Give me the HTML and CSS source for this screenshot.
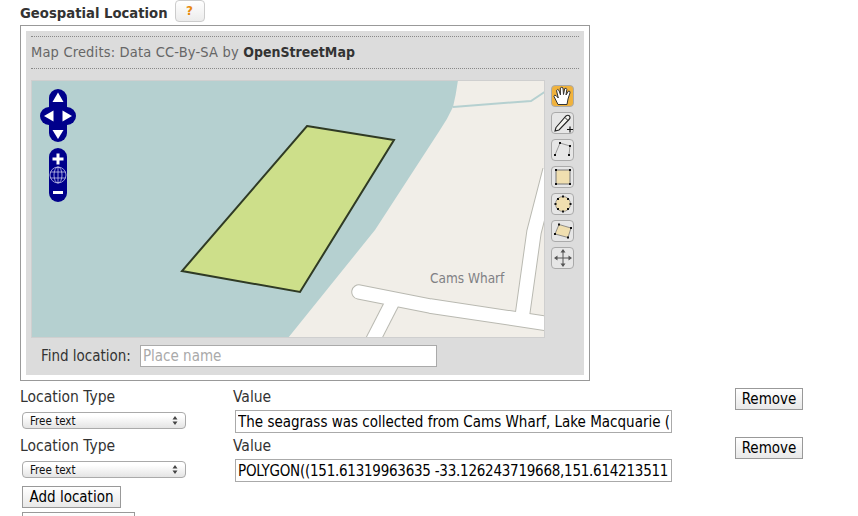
FILE: index.html
```html
<!DOCTYPE html>
<html lang="en">
<head>
<meta charset="utf-8">
<title>Geospatial Location</title>
<link rel="stylesheet" href="styles.css">
</head>
<body>
<div class="heading">
  <h2 class="title">Geospatial Location</h2>
  <button class="help" type="button">?</button>
</div>
<div class="frame">
  <div class="panel">
    <div class="credits">Map Credits: Data CC-By-SA by <strong>OpenStreetMap</strong></div>
    <div class="map-row">
      <div class="map">
        <svg class="map-art" viewBox="32 81 512 256" width="512" height="256" aria-hidden="true">
          <rect x="31" y="80" width="514" height="258" fill="#b5d0d0"/>
          <path d="M458 80 Q456 95 453 107 Q447 120 440 130 L375 230 L288 338 H545 V80 Z" fill="#f1eee8"/>
          <path d="M453 107 L531 101 L546 91" fill="none" stroke="#b5d0d0" stroke-width="2"/>
          <g fill="none" stroke="#b9b9b1" stroke-width="15.500" stroke-linejoin="round">
            <path d="M392 303 L372 342"/>
            <path d="M522 318 L534 232 L550 170"/>
            <path d="M359 292 L430 306 L550 324" stroke-linecap="round"/>
          </g>
          <g fill="none" stroke="#fff" stroke-width="13.500" stroke-linejoin="round">
            <path d="M392 303 L372 342"/>
            <path d="M522 318 L534 232 L550 170"/>
            <path d="M359 292 L430 306 L550 324" stroke-linecap="round"/>
          </g>
          <text x="430" y="283" class="place">Cams Wharf</text>
          <path d="M307 126 L394 140 L300 292 L182 271 Z" fill="#cddf8a" stroke="#2f3a24" stroke-width="2"/>
          <g fill="#00008b">
            <rect x="49" y="89" width="18" height="53" rx="9"/>
            <rect x="40" y="107" width="36" height="18" rx="9"/>
            <rect x="49" y="148" width="18" height="54" rx="9"/>
          </g>
          <g fill="#fff">
            <path d="M58 92.500 L63.500 102 H52.500 Z"/>
            <path d="M58 139 L52.500 130 H63.500 Z"/>
            <path d="M44 116 L53.500 110.500 V121.500 Z"/>
            <path d="M72 116 L62.500 110.500 V121.500 Z"/>
            <rect x="52.500" y="157.500" width="11" height="3"/>
            <rect x="56.500" y="153.500" width="3" height="11"/>
            <rect x="53" y="191" width="10" height="3"/>
          </g>
          <g fill="none" stroke="#d8d8f4" stroke-width=".7">
            <circle cx="58" cy="175" r="8"/>
            <ellipse cx="58" cy="175" rx="4" ry="8"/>
            <path d="M58 167 V183 M50.500 172 H65.500 M50.500 178 H65.500"/>
          </g>
        </svg>
      </div>
      <div class="tools">
        <span class="tool tool-on"><svg viewBox="0 0 24 24" width="24" height="24"><path d="M7 20.500 L3 12.500 Q3 10.500 5 11.500 L7.300 14 L5.500 6.500 Q6.800 4.500 8 6.500 L9.500 11 L9.300 4 Q11 2.500 12 4 L12.500 10.500 L13.700 4.500 Q15.500 3.500 15.800 5.500 L15 11 L17.500 7 Q19.500 7 19 8.800 L17 15 L16 20.500 Z" fill="#fff" stroke="#333" stroke-width="1"/></svg></span>
        <span class="tool"><svg viewBox="0 0 24 24" width="24" height="24"><path d="M5 16.500 L15 5 Q17 3.500 18.500 5 Q19.800 6.800 18 8.500 L8 19 L4 20 Z" fill="#f4f4f0" stroke="#222" stroke-width="1.100"/><path d="M14 6.500 L17 9.500" stroke="#222"/><path d="M16 18.500 H22 M19 15.500 V21.500" stroke="#111" stroke-width="1.200"/></svg></span>
        <span class="tool"><svg viewBox="0 0 24 24" width="24" height="24"><path d="M4 17 L9 5 L19 8 L18 17" fill="none" stroke="#777" stroke-width=".7"/><g fill="#111"><rect x="3" y="16" width="2" height="2"/><rect x="8" y="4" width="2" height="2"/><rect x="18" y="7" width="2" height="2"/><rect x="17" y="16" width="2" height="2"/></g></svg></span>
        <span class="tool"><svg viewBox="0 0 24 24" width="24" height="24"><rect x="5" y="5" width="14" height="14" fill="#f0dfb0" stroke="#777"/><g fill="#111"><rect x="4" y="4" width="2" height="2"/><rect x="18" y="4" width="2" height="2"/><rect x="4" y="18" width="2" height="2"/><rect x="18" y="18" width="2" height="2"/></g></svg></span>
        <span class="tool"><svg viewBox="0 0 24 24" width="24" height="24"><circle cx="12" cy="12" r="7.500" fill="#f0dfb0" stroke="#777" stroke-width=".7"/><g fill="#111"><rect x="11" y="3.500" width="2" height="2"/><rect x="11" y="18.500" width="2" height="2"/><rect x="3.500" y="11" width="2" height="2"/><rect x="18.500" y="11" width="2" height="2"/><rect x="6" y="6" width="2" height="2"/><rect x="16" y="6" width="2" height="2"/><rect x="6" y="16" width="2" height="2"/><rect x="16" y="16" width="2" height="2"/></g></svg></span>
        <span class="tool"><svg viewBox="0 0 24 24" width="24" height="24"><path d="M8 5.500 L20 9 L17 18.500 L4 15 Z" fill="#f0dfb0" stroke="#777" stroke-width=".8"/><g fill="#111"><rect x="7" y="4.500" width="2" height="2"/><rect x="19" y="8" width="2" height="2"/><rect x="16" y="17.500" width="2" height="2"/><rect x="3" y="14" width="2" height="2"/></g></svg></span>
        <span class="tool"><svg viewBox="0 0 24 24" width="24" height="24"><path d="M12 4.500 V19.500 M4.500 12 H19.500" stroke="#555" stroke-width="1"/><path d="M12 3 L14.500 6.500 H9.500 Z M12 21 L9.500 17.500 H14.500 Z M3 12 L6.500 9.500 V14.500 Z M21 12 L17.500 9.500 V14.500 Z" fill="#555"/></svg></span>
      </div>
    </div>
    <div class="find">
      <label class="find-label" for="place">Find location:</label>
      <input class="find-input" id="place" type="text" placeholder="Place name">
    </div>
  </div>
</div>
<div class="loc-row">
  <div class="col-type">
    <div class="label">Location Type</div>
    <select class="type"><option>Free text</option></select>
  </div>
  <div class="col-value">
    <div class="label">Value</div>
    <input class="value" type="text" value="The seagrass was collected from Cams Wharf, Lake Macquarie (NSW)">
  </div>
  <button class="btn remove" type="button">Remove</button>
</div>
<div class="loc-row">
  <div class="col-type">
    <div class="label">Location Type</div>
    <select class="type"><option>Free text</option></select>
  </div>
  <div class="col-value">
    <div class="label">Value</div>
    <input class="value value-geo" type="text" value="POLYGON((151.61319963635 -33.126243719668,151.614213511">
  </div>
  <button class="btn remove" type="button">Remove</button>
</div>
<button class="btn add" type="button">Add location</button>
<button class="btn next" type="button">&nbsp;</button>
</body>
</html>
```
FILE: styles.css
```css
html, body {
  margin: 0;
  height: 516px;
  overflow: hidden;
  background: #fff;
}
body {
  padding: 0 0 0 20px;
  font-family: "DejaVu Sans Condensed", "DejaVu Sans", sans-serif;
  color: #333;
  box-sizing: border-box;
}
.heading {
  display: flex;
  align-items: flex-start;
  gap: 7px;
  height: 25px;
}
.title {
  margin: 0;
  font-size: 14.700px;
  line-height: 25px;
  font-weight: bold;
  color: #333;
}
.help {
  width: 30px;
  height: 22px;
  padding: 0;
  border: 1px solid #ccc;
  border-radius: 4px;
  background: linear-gradient(#fff, #ececec);
  color: #e8890c;
  font: bold 12px "DejaVu Sans", sans-serif;
}
.frame {
  width: 570px;
  height: 356px;
  box-sizing: border-box;
  border: 1px solid #999;
  padding: 5px;
}
.panel {
  width: 558px;
  height: 344px;
  background: #dcdcdc;
  padding: 5px 5px 0;
  box-sizing: border-box;
}
.credits {
  height: 33px;
  box-sizing: border-box;
  border-top: 1px dotted #888;
  border-bottom: 1px dotted #888;
  font-size: 14.500px;
  line-height: 30px;
  letter-spacing: .18px;
  color: #666;
}
.credits strong {
  font-size: 14px;
  letter-spacing: 0;
  color: #333;
}
.map-row {
  display: flex;
  gap: 6px;
  margin-top: 11px;
}
.map {
  width: 514px;
  height: 258px;
  box-sizing: border-box;
  flex: none;
  border: 1px solid #cfcfcf;
}
.map-art {
  display: block;
}
.place {
  font: 13.500px "DejaVu Sans Condensed", "DejaVu Sans", sans-serif;
  fill: #808084;
}
.tools {
  display: flex;
  flex-direction: column;
  gap: 5px;
  padding-top: 5px;
}
.tool {
  display: block;
  width: 21px;
  height: 20px;
  border: 1px solid #aaa;
  border-radius: 4px;
  background: #e6e6e6;
  overflow: hidden;
}
.tool svg {
  display: block;
  margin: -2px 0 0 -1.500px;
}
.tool-on {
  background: #f0b23c;
}
.find {
  display: flex;
  align-items: center;
  gap: 9px;
  margin-top: 7px;
  padding-left: 10px;
}
.find-label {
  font-size: 15px;
  color: #333;
}
.find-input {
  width: 297px;
  height: 22px;
  box-sizing: border-box;
  padding: 0 2px;
  border: 1px solid #aaa;
  background: #fff;
  font: 15px "DejaVu Sans Condensed", "DejaVu Sans", sans-serif;
}
.find-input::placeholder {
  color: #aaa;
}
.loc-row {
  display: flex;
  height: 49px;
}
.col-type {
  width: 213px;
  flex: none;
}
.col-value {
  width: 502px;
  flex: none;
}
.label {
  font-size: 15.500px;
  line-height: 17px;
  margin-top: 8px;
  color: #333;
}
.type {
  display: block;
  appearance: none;
  width: 164px;
  height: 17px;
  margin: 6px 0 0 2px;
  border: 1px solid #aaa;
  border-radius: 4px;
  background:
    url("data:image/svg+xml,%3Csvg xmlns='http://www.w3.org/2000/svg' width='6' height='9'%3E%3Cpath d='M3 0 L5.500 3.500 H.5 Z M3 9 L.5 5.500 H5.500 Z' fill='%23444'/%3E%3C/svg%3E") no-repeat right 7px center,
    linear-gradient(#fff 20%, #e4e4e4);
  color: #111;
  font: 11.500px "DejaVu Sans Condensed", "DejaVu Sans", sans-serif;
  padding: 0 0 0 7px;
}
.value {
  display: block;
  width: 437px;
  height: 23px;
  margin: 4px 0 0 2px;
  box-sizing: border-box;
  padding: 0 2px;
  border: 1px solid #aaa;
  background: #fff;
  color: #000;
  font: 15px "DejaVu Sans Condensed", "DejaVu Sans", sans-serif;
}
.value-geo {
  letter-spacing: -.25px;
}
.btn {
  display: block;
  border: 1px solid #999;
  background: linear-gradient(#fff, #e8e8e8);
  color: #000;
  font: 15px "DejaVu Sans Condensed", "DejaVu Sans", sans-serif;
  padding: 0;
}
.remove {
  width: 68px;
  height: 22px;
  margin-top: 7px;
}
.add {
  width: 99px;
  height: 22px;
  margin: 7px 0 0 2px;
}
.next {
  width: 113px;
  height: 22px;
  margin: 4px 0 0 2px;
}
```
